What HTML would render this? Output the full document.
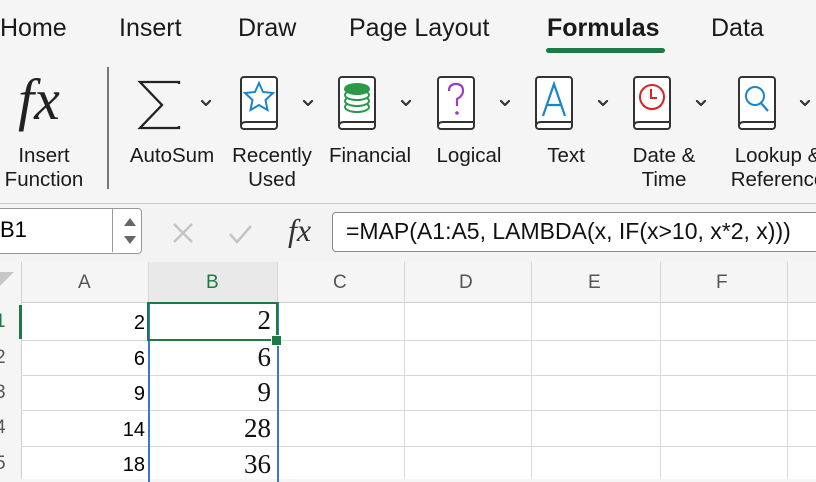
<!DOCTYPE html><html><head><style>
body{margin:0;width:816px;height:479px;overflow:hidden;background:#f5f5f5;font-family:"Liberation Sans",sans-serif;position:relative}
.a{position:absolute;white-space:nowrap}
.tab{top:14px;font-size:25px;color:#1a1a1a}
.lbl{font-size:20.5px;color:#1a1a1a;text-align:center;line-height:24px;transform:translateX(-50%)}
.cell{position:absolute;font-size:20px;text-align:right}
.ser{font-family:"Liberation Serif",serif;font-size:27px;color:#111}
.hd{position:absolute;top:272px;font-size:19px;color:#555}
.rh{position:absolute;left:-5px;font-size:19px;color:#555}
</style></head><body>
<div class="a tab" style="left:0">Home</div>
<div class="a tab" style="left:119px">Insert</div>
<div class="a tab" style="left:238px">Draw</div>
<div class="a tab" style="left:349px">Page Layout</div>
<div class="a tab" style="left:547px;font-weight:bold">Formulas</div>
<div class="a tab" style="left:711px">Data</div>
<div class="a" style="left:546px;top:48px;width:119px;height:5px;border-radius:3px;background:#1e7a45"></div>
<div class="a" style="left:107px;top:67px;width:1.5px;height:122px;background:#777"></div>
<div class="a" style="left:18px;top:66px;font-family:'Liberation Serif',serif;font-style:italic;font-size:58px;color:#222">fx</div>
<div class="a lbl" style="left:44px;top:144px">Insert<br>Function</div>
<svg class="a" style="left:0;top:0" width="816" height="200">
<path d="M179 84V82H140L162 105L140 128H179V126" fill="none" stroke="#222" stroke-width="2.3"/>
<defs><g id="bk"><rect x="1" y="1" width="36" height="52" rx="3" fill="#fff" stroke="#333" stroke-width="2"/><path d="M1 50Q1 46 6 46H37" fill="none" stroke="#333" stroke-width="2"/></g></defs>
<g fill="none" stroke="#333" stroke-width="2.2" stroke-linecap="round" stroke-linejoin="round">
<path d="M202 101l4 4 4-4M304 101l4 4 4-4M402 101l4 4 4-4M501 101l4 4 4-4M599 101l4 4 4-4M697 101l4 4 4-4M801 101l4 4 4-4"/></g>
<use href="#bk" x="240" y="76"/><use href="#bk" x="338" y="76"/><use href="#bk" x="437" y="76"/><use href="#bk" x="535" y="76"/><use href="#bk" x="633" y="76"/><use href="#bk" x="738" y="76"/>
<path d="M259 83l4 9 10 1-7.5 7 2 10-8.5-5-8.5 5 2-10-7.5-7 10-1z" fill="none" stroke="#1a86c8" stroke-width="2"/>
<g fill="#fff" stroke="#2a9a48" stroke-width="2"><ellipse cx="357" cy="107" rx="12" ry="5"/><ellipse cx="357" cy="101" rx="12" ry="5"/><ellipse cx="357" cy="95" rx="12" ry="5"/><ellipse cx="357" cy="89" rx="12" ry="5" fill="#2a9a48"/></g>
<path d="M449 91q0-7 7-7t7 7q0 5-6 8v7" fill="none" stroke="#9b3fc0" stroke-width="2.2"/><circle cx="457" cy="113" r="1.8" fill="#9b3fc0"/>
<path d="M543 116l11-32 11 32M547 105h14" fill="none" stroke="#1a86c8" stroke-width="2.2"/>
<circle cx="652" cy="97" r="12" fill="none" stroke="#e02020" stroke-width="2"/><path d="M651 89v9h6" fill="none" stroke="#e02020" stroke-width="2"/>
<circle cx="755" cy="96" r="9" fill="none" stroke="#1a86c8" stroke-width="2"/><path d="M761 103l7 8" stroke="#1a86c8" stroke-width="2.2"/>
</svg>
<div class="a lbl" style="left:172px;top:144px">AutoSum</div>
<div class="a lbl" style="left:272px;top:144px">Recently<br>Used</div>
<div class="a lbl" style="left:370px;top:144px">Financial</div>
<div class="a lbl" style="left:469px;top:144px">Logical</div>
<div class="a lbl" style="left:566px;top:144px">Text</div>
<div class="a lbl" style="left:664px;top:144px">Date &amp;<br>Time</div>
<div class="a lbl" style="left:778px;top:144px">Lookup &amp;<br>Reference</div>
<!-- formula bar -->
<div class="a" style="left:0;top:203px;width:816px;height:58px;background:#f3f3f3;border-top:1px solid #ccc;border-bottom:1px solid #ccc"></div>
<div class="a" style="left:-4px;top:208px;width:144px;height:44px;background:#fff;border:1px solid #999;border-radius:4px"></div>
<div class="a" style="left:112px;top:208px;width:1px;height:44px;background:#999"></div>
<div class="a" style="left:0;top:217px;font-size:22px">B1</div>
<svg class="a" style="left:120px;top:212px" width="20" height="38"><path d="M4 14l6-8 6 8zM4 24l6 8 6-8z" fill="#666"/></svg>
<svg class="a" style="left:170px;top:220px" width="90" height="30"><path d="M4 4l18 18M22 4L4 22" stroke="#c4c4c4" stroke-width="2.5"/><path d="M60 14l7 8 14-16" fill="none" stroke="#c4c4c4" stroke-width="2.5"/></svg>
<div class="a" style="left:288px;top:212px;font-family:'Liberation Serif',serif;font-style:italic;font-size:32px;color:#333">fx</div>
<div class="a" style="left:332px;top:212px;width:490px;height:38px;background:#fff;border:1px solid #888;border-radius:4px"></div>
<div class="a" style="left:346px;top:218px;font-size:23px;color:#111">=MAP(A1:A5, LAMBDA(x, IF(x&gt;10, x*2, x)))</div>
<!-- grid -->
<div class="a" style="left:0;top:262px;width:816px;height:217px;background:#fff"></div>
<div class="a" style="left:0;top:262px;width:816px;height:40px;background:#f5f5f5;border-bottom:1px solid #d0d0d0"></div>
<div class="a" style="left:0;top:262px;width:21px;height:217px;background:#f5f5f5;border-right:1px solid #d0d0d0"></div>
<div class="a" style="left:148px;top:262px;width:129px;height:40px;background:#e9e9e9"></div>
<svg class="a" style="left:0;top:262px" width="816" height="217">
<g stroke="#d8d8d8" stroke-width="1">
<path d="M148.5 0V217M277.5 0V217M404.5 0V217M531.5 0V217M660.5 0V217M787.5 0V217"/>
<path d="M21 78.5H816M21 113.5H816M21 148.5H816M21 184.5H816"/>
</g>
<path d="M0 0H14L0 14z" fill="#c8c8c8" transform="translate(0,10)"/>
</svg>
<div class="hd" style="left:78px">A</div>
<div class="hd" style="left:206px;color:#1e7a45">B</div>
<div class="hd" style="left:333px">C</div>
<div class="hd" style="left:459px">D</div>
<div class="hd" style="left:588px">E</div>
<div class="hd" style="left:716px">F</div>
<div class="a" style="left:19px;top:305px;width:3px;height:34px;background:#1e7a45"></div>
<div class="rh" style="top:311px;color:#1e7a45">1</div>
<div class="rh" style="top:347px">2</div>
<div class="rh" style="top:382px">3</div>
<div class="rh" style="top:417px">4</div>
<div class="rh" style="top:453px">5</div>
<div class="cell" style="left:40px;width:105px;top:312px">2</div>
<div class="cell" style="left:40px;width:105px;top:348px">6</div>
<div class="cell" style="left:40px;width:105px;top:383px">9</div>
<div class="cell" style="left:40px;width:105px;top:419px">14</div>
<div class="cell" style="left:40px;width:105px;top:454px">18</div>
<div class="a" style="left:148px;top:302px;width:127px;height:180px;border-left:2px solid #3a78d0;border-right:2px solid #3a78d0"></div>
<div class="a" style="left:147px;top:302px;width:127px;height:35px;border:2.5px solid #1e7a45"></div>
<div class="a" style="left:271px;top:335px;width:9px;height:9px;background:#1e7a45;border:1px solid #fff"></div>
<div class="cell ser" style="left:160px;width:111px;top:305px">2</div>
<div class="cell ser" style="left:160px;width:111px;top:342px">6</div>
<div class="cell ser" style="left:160px;width:111px;top:377px">9</div>
<div class="cell ser" style="left:160px;width:111px;top:413px">28</div>
<div class="cell ser" style="left:160px;width:111px;top:449px">36</div>
</body></html>
